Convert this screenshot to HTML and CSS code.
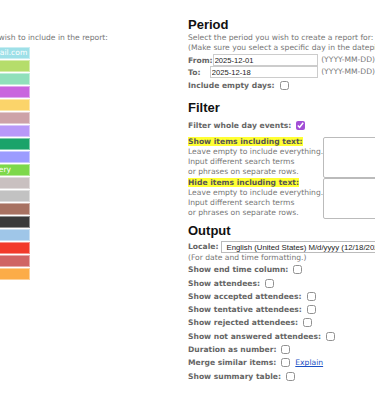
FILE: index.html
```html
<!DOCTYPE html>
<html>
<head>
  <title>Calendar Report</title>
  <link rel="stylesheet" href="styles.css">
</head>
<body>
  <div class="page">
    <div class="calendars">
      <div class="calendars-inner">
        <p class="hint">Select the calendars you wish to include in the report:</p>
        <ul class="cal-list">
          <li style="background:#9ee0e8">familyevents@gmail.com</li>
          <li style="background:#b5dd6b">Birthdays</li>
          <li style="background:#90e0bb">Work</li>
          <li style="background:#c965de">Holidays</li>
          <li style="background:#fbd46a">Gym</li>
          <li style="background:#cda2a8">School</li>
          <li style="background:#b898f8">Travel</li>
          <li style="background:#1aa36a">Meetings</li>
          <li style="background:#9c9cff">Projects</li>
          <li style="background:#7dd84a">Warehouses Delivery</li>
          <li style="background:#c9c0c0">Support</li>
          <li style="background:#c2c2c2">Other</li>
          <li style="background:#a87262">Clients</li>
          <li style="background:#3a3a3a">Private</li>
          <li style="background:#9fc6e8">Team</li>
          <li style="background:#f23a2b">Deadlines</li>
          <li style="background:#d06464">Sales</li>
          <li style="background:#fcac48">Events</li>
        </ul>
      </div>
    </div>

    <div class="settings">
      <h2>Period</h2>
      <p class="hint">Select the period you wish to create a report for:<br>(Make sure you select a specific day in the datepicker.)</p>
      <div class="date-row first">
        <label class="date-label">From:</label>
        <input class="date-input" type="text" value="2025-12-01">
        <span class="hint">(YYYY-MM-DD)</span>
      </div>
      <div class="date-row">
        <label class="date-label">To:</label>
        <input class="date-input" type="text" value="2025-12-18">
        <span class="hint">(YYYY-MM-DD)</span>
      </div>
      <div class="check-row after-dates"><span class="label">Include empty days:</span><input type="checkbox"></div>

      <h2 class="section">Filter</h2>
      <div class="check-row after-heading"><span class="label">Filter whole day events:</span><input type="checkbox" checked></div>
      <div class="text-filter first">
        <div class="text-filter-info">
          <span class="label mark">Show items including text:</span>
          <p class="hint">Leave empty to include everything.<br>Input different search terms<br>or phrases on separate rows.</p>
        </div>
        <textarea class="filter-box"></textarea>
      </div>
      <div class="text-filter">
        <div class="text-filter-info">
          <span class="label mark">Hide items including text:</span>
          <p class="hint">Leave empty to include everything.<br>Input different search terms<br>or phrases on separate rows.</p>
        </div>
        <textarea class="filter-box"></textarea>
      </div>

      <h2 class="section output">Output</h2>
      <div class="locale-row">
        <span class="label">Locale:</span>
        <select class="locale-select">
          <option>English (United States) M/d/yyyy (12/18/2025)</option>
        </select>
      </div>
      <p class="hint">(For date and time formatting.)</p>
      <div class="check-row"><span class="label">Show end time column:</span><input type="checkbox"></div>
      <div class="check-row"><span class="label">Show attendees:</span><input type="checkbox"></div>
      <div class="check-row"><span class="label">Show accepted attendees:</span><input type="checkbox"></div>
      <div class="check-row"><span class="label">Show tentative attendees:</span><input type="checkbox"></div>
      <div class="check-row"><span class="label">Show rejected attendees:</span><input type="checkbox"></div>
      <div class="check-row"><span class="label">Show not answered attendees:</span><input type="checkbox"></div>
      <div class="check-row"><span class="label">Duration as number:</span><input type="checkbox"></div>
      <div class="check-row"><span class="label">Merge similar items:</span><input type="checkbox"><a class="explain" href="#">Explain</a></div>
      <div class="check-row"><span class="label">Show summary table:</span><input type="checkbox"></div>
    </div>
  </div>
</body>
</html>
```

FILE: styles.css
```css
body {
  margin: 0;
  background: #fff;
  font-family: "DejaVu Sans", Verdana, sans-serif;
  font-size: 7.6px;
  color: #666;
}

.page {
  display: flex;
  width: 375px;
  height: 394px;
  overflow: hidden;
}

h2 {
  font-family: "Liberation Sans", Arial, sans-serif;
  font-size: 13px;
  line-height: 16px;
  color: #111;
  margin: 0;
}

.hint {
  margin: 0;
  line-height: 10px;
  color: #777;
  white-space: nowrap;
}

.label {
  font-weight: bold;
  color: #666;
  white-space: nowrap;
}

/* left column: calendar list, scrolled out of view */
.calendars {
  width: 188px;
  flex-shrink: 0;
  overflow: hidden;
}

.calendars-inner {
  margin-left: -98px;
  padding-top: 33px;
}

.cal-list {
  list-style: none;
  margin: 4px 0 0;
  padding: 0;
  width: 128px;
}

.cal-list li {
  height: 12px;
  line-height: 12px;
  margin-bottom: 1px;
  padding-left: 29px;
  color: #fff;
  box-shadow: inset 0 0 0 1px rgba(255, 255, 255, 0.45);
  white-space: nowrap;
  overflow: hidden;
}

/* right column: settings */
.settings {
  flex: 1;
  padding-top: 17px;
  min-width: 0;
}

.settings h2.section {
  margin-top: 8px;
}

.settings h2.output {
  margin-top: 4px;
}

.date-row {
  display: flex;
  align-items: center;
  height: 12px;
}

.date-row.first {
  margin-top: 1px;
}

.date-label {
  width: 26px;
  font-weight: bold;
  color: #666;
}

.date-input {
  width: 128px;
  height: 12px;
  box-sizing: border-box;
  border: 1px solid #ccc;
  padding: 0 1px;
  font-family: "Liberation Sans", Arial, sans-serif;
  font-size: 7.6px;
  color: #222;
  margin: 0 3px 0 0;
}

.check-row {
  display: flex;
  align-items: center;
  height: 13.3px;
}

.check-row.after-dates {
  margin-top: 1px;
}

.check-row.after-heading {
  margin-top: 3px;
}

.check-row input {
  width: 9px;
  height: 9px;
  margin: 0 0 0 5px;
  accent-color: #a24fd6;
  opacity: 0.8;
}

.check-row input:checked {
  opacity: 1;
}

.explain {
  color: #1a4fc4;
  margin-left: 5px;
}

.text-filter {
  display: flex;
  align-items: flex-start;
}

.text-filter.first {
  margin-top: 4px;
}

.text-filter-info {
  width: 135px;
  flex-shrink: 0;
}

.mark {
  background: #ffff33;
  color: #555;
  line-height: 10px;
}

.filter-box {
  width: 80px;
  height: 41px;
  box-sizing: border-box;
  border: 1px solid #bbb;
  border-radius: 2px;
  margin: 0;
  resize: none;
  flex-shrink: 0;
}

.locale-row {
  display: flex;
  align-items: center;
  height: 13px;
  margin-top: 1.5px;
}

.locale-select {
  height: 12px;
  margin-left: 3px;
  font-family: "Liberation Sans", Arial, sans-serif;
  font-size: 7.8px;
  color: #222;
  padding: 0;
  border: 1px solid #bbb;
  background: #fff;
  width: 240px;
  flex-shrink: 0;
}
```
